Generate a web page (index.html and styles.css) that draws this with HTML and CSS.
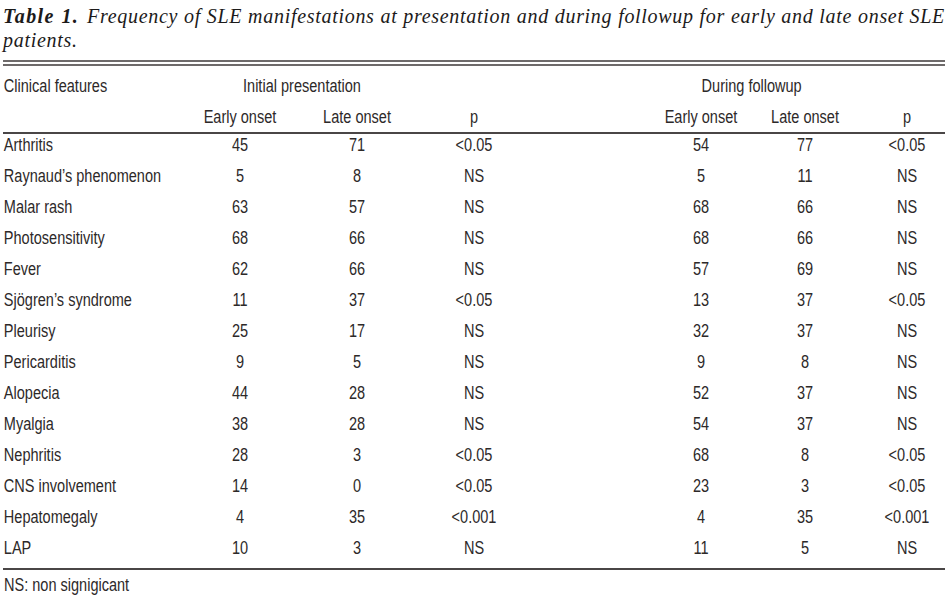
FILE: index.html
```html
<!DOCTYPE html>
<html lang="en">
<head>
<meta charset="utf-8">
<title>Table 1</title>
<link rel="stylesheet" href="styles.css">
</head>
<body>
<div class="sheet">
  <p class="caption"><b>Table 1.</b> Frequency of SLE manifestations at presentation and during followup for early and late onset SLE patients.</p>
  <div class="rule-double"></div>
  <div class="row head1">
    <div class="label">Clinical features</div>
    <div class="span2 left-group">Initial presentation</div>
    <div></div>
    <div></div>
    <div class="span2 right-group">During followup</div>
    <div></div>
  </div>
  <div class="row head2">
    <div></div>
    <div class="c">Early onset</div>
    <div class="c">Late onset</div>
    <div class="c">p</div>
    <div></div>
    <div class="c">Early onset</div>
    <div class="c">Late onset</div>
    <div class="c p2">p</div>
  </div>
  <div class="rule"></div>
  <div class="body">
    <div class="row"><div class="label">Arthritis</div><div class="c">45</div><div class="c">71</div><div class="c">&lt;0.05</div><div></div><div class="c">54</div><div class="c">77</div><div class="c p2">&lt;0.05</div></div>
    <div class="row"><div class="label">Raynaud’s phenomenon</div><div class="c">5</div><div class="c">8</div><div class="c">NS</div><div></div><div class="c">5</div><div class="c">11</div><div class="c p2">NS</div></div>
    <div class="row"><div class="label">Malar rash</div><div class="c">63</div><div class="c">57</div><div class="c">NS</div><div></div><div class="c">68</div><div class="c">66</div><div class="c p2">NS</div></div>
    <div class="row"><div class="label">Photosensitivity</div><div class="c">68</div><div class="c">66</div><div class="c">NS</div><div></div><div class="c">68</div><div class="c">66</div><div class="c p2">NS</div></div>
    <div class="row"><div class="label">Fever</div><div class="c">62</div><div class="c">66</div><div class="c">NS</div><div></div><div class="c">57</div><div class="c">69</div><div class="c p2">NS</div></div>
    <div class="row"><div class="label">Sjögren’s syndrome</div><div class="c">11</div><div class="c">37</div><div class="c">&lt;0.05</div><div></div><div class="c">13</div><div class="c">37</div><div class="c p2">&lt;0.05</div></div>
    <div class="row"><div class="label">Pleurisy</div><div class="c">25</div><div class="c">17</div><div class="c">NS</div><div></div><div class="c">32</div><div class="c">37</div><div class="c p2">NS</div></div>
    <div class="row"><div class="label">Pericarditis</div><div class="c">9</div><div class="c">5</div><div class="c">NS</div><div></div><div class="c">9</div><div class="c">8</div><div class="c p2">NS</div></div>
    <div class="row"><div class="label">Alopecia</div><div class="c">44</div><div class="c">28</div><div class="c">NS</div><div></div><div class="c">52</div><div class="c">37</div><div class="c p2">NS</div></div>
    <div class="row"><div class="label">Myalgia</div><div class="c">38</div><div class="c">28</div><div class="c">NS</div><div></div><div class="c">54</div><div class="c">37</div><div class="c p2">NS</div></div>
    <div class="row"><div class="label">Nephritis</div><div class="c">28</div><div class="c">3</div><div class="c">&lt;0.05</div><div></div><div class="c">68</div><div class="c">8</div><div class="c p2">&lt;0.05</div></div>
    <div class="row"><div class="label">CNS involvement</div><div class="c">14</div><div class="c">0</div><div class="c">&lt;0.05</div><div></div><div class="c">23</div><div class="c">3</div><div class="c p2">&lt;0.05</div></div>
    <div class="row"><div class="label">Hepatomegaly</div><div class="c">4</div><div class="c">35</div><div class="c">&lt;0.001</div><div></div><div class="c">4</div><div class="c">35</div><div class="c p2">&lt;0.001</div></div>
    <div class="row"><div class="label">LAP</div><div class="c">10</div><div class="c">3</div><div class="c">NS</div><div></div><div class="c">11</div><div class="c">5</div><div class="c p2">NS</div></div>
  </div>
  <div class="rule"></div>
  <p class="note"><span>NS: non signigicant</span></p>
</div>
</body>
</html>
```
FILE: styles.css
```css
html, body {
  margin: 0;
  padding: 0;
  background: #ffffff;
}

.sheet {
  padding: 0 3px;
  width: 942px;
  color: #2d2929;
  font-family: "Liberation Sans", Arial, sans-serif;
  font-size: 17.5px;
}

.caption {
  margin: 0 0 8px;
  padding-top: 4px;
  font-family: "Liberation Serif", "Times New Roman", serif;
  font-style: italic;
  font-size: 20px;
  line-height: 24px;
  letter-spacing: 0.7px;
  text-align: justify;
  color: #1c1a1a;
}

.caption b {
  font-weight: bold;
  letter-spacing: 1.4px;
  padding-right: 2px;
}

.rule-double {
  height: 2px;
  border-top: 2px solid #6e6a6a;
  border-bottom: 2px solid #6e6a6a;
}

.rule {
  height: 0;
  border-top: 2px solid #4a4646;
}

.row {
  display: grid;
  grid-template-columns: 177px 120px 114px 120px 107px 120px 88px 96px;
  line-height: 22px;
  padding-bottom: 9px;
}

/* condensed face: the source uses a narrow grotesque */
.row > div,
.note span {
  transform: scaleX(0.83);
  transform-origin: center center;
  white-space: nowrap;
}

.head1 {
  padding-top: 9px;
  padding-bottom: 0;
}

.head2 {
  padding-top: 9px;
  padding-bottom: 4px;
}

.label {
  padding-left: 1px;
}

.row > .label {
  transform-origin: left center;
}

.c {
  text-align: center;
}

.p2 {
  padding-left: 20px;
}

.row > .p2 {
  transform-origin: 58px center;
}

.span2 {
  grid-column: span 2;
  text-align: center;
}

.left-group {
  padding-left: 12px;
}

.right-group {
  padding-left: 16px;
}

.note {
  margin: 0;
  padding-top: 4px;
  padding-left: 1px;
  line-height: 22px;
}

.note span {
  display: inline-block;
  transform-origin: left center;
}
```
